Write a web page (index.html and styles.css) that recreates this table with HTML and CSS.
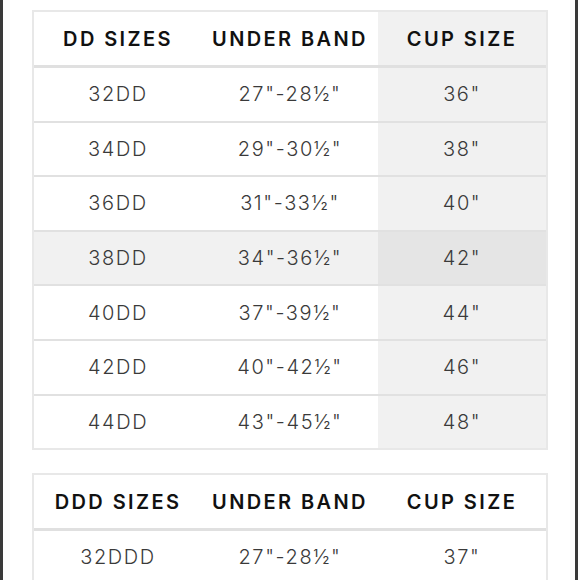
FILE: index.html
```html
<!DOCTYPE html>
<html>
<head>
<meta charset="utf-8">
<link rel="stylesheet" href="styles.css">
</head>
<body>
<div class="frame">
  <div class="chart">
    <div class="row head">
      <div class="cell">DD SIZES</div>
      <div class="cell">UNDER BAND</div>
      <div class="cell cup">CUP SIZE</div>
    </div>
    <div class="row"><div class="cell">32DD</div><div class="cell">27"-28½"</div><div class="cell cup">36"</div></div>
    <div class="row"><div class="cell">34DD</div><div class="cell">29"-30½"</div><div class="cell cup">38"</div></div>
    <div class="row"><div class="cell">36DD</div><div class="cell">31"-33½"</div><div class="cell cup">40"</div></div>
    <div class="row hl"><div class="cell">38DD</div><div class="cell">34"-36½"</div><div class="cell cup">42"</div></div>
    <div class="row"><div class="cell">40DD</div><div class="cell">37"-39½"</div><div class="cell cup">44"</div></div>
    <div class="row"><div class="cell">42DD</div><div class="cell">40"-42½"</div><div class="cell cup">46"</div></div>
    <div class="row"><div class="cell">44DD</div><div class="cell">43"-45½"</div><div class="cell cup">48"</div></div>
  </div>
  <div class="chart plain">
    <div class="row head">
      <div class="cell">DDD SIZES</div>
      <div class="cell">UNDER BAND</div>
      <div class="cell cup">CUP SIZE</div>
    </div>
    <div class="row"><div class="cell">32DDD</div><div class="cell">27"-28½"</div><div class="cell cup">37"</div></div>
  </div>
</div>
</body>
</html>
```

FILE: styles.css
```css
html, body {
  margin: 0;
  padding: 0;
  background: #ffffff;
  overflow: hidden;
}

.frame {
  width: 572px;
  height: 580px;
  border-left: 3px solid #3a3a3a;
  border-right: 3px solid #3a3a3a;
  background: #ffffff;
  overflow: hidden;
  font-family: Inter, "DejaVu Sans", sans-serif;
}

.chart {
  width: 512px;
  margin: 10px 0 0 29px;
  border: 2px solid #e8e8e8;
}

.chart.plain {
  margin-top: 23px;
}

.row {
  display: grid;
  grid-template-columns: 168px 176px 168px;
  height: 52.6px;
  border-bottom: 2px solid #e1e1e1;
}

.row:last-child {
  border-bottom: none;
}

.row.head {
  height: 53px;
  border-bottom: 3px solid #e0e0e0;
}

.cell {
  display: flex;
  align-items: center;
  justify-content: center;
  font-size: 20px;
  font-weight: 300;
  letter-spacing: 1.6px;
  color: #3a3a3a;
  white-space: nowrap;
}

.head .cell {
  font-weight: 600;
  letter-spacing: 2.4px;
  color: #111111;
}

.chart .cup {
  background: #f1f1f1;
}

.chart .hl {
  background: #f1f1f1;
}

.chart .hl .cup {
  background: #e5e5e5;
}

.chart.plain .cup {
  background: transparent;
}
```
